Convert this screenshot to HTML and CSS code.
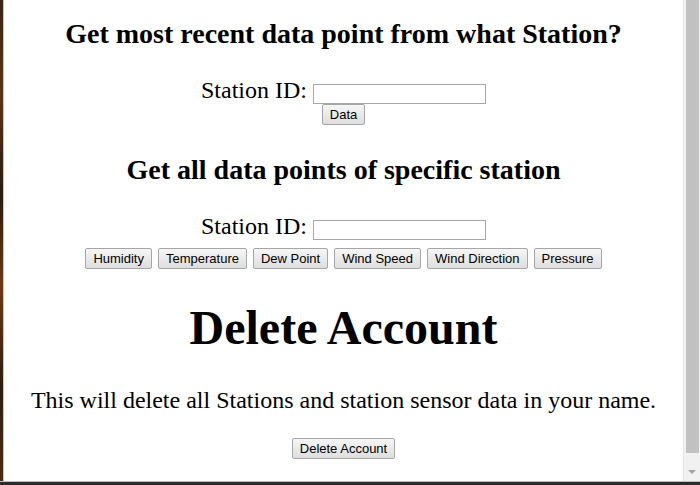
FILE: index.html
```html
<!DOCTYPE html>
<html>
<head>
<meta charset="utf-8">
<link rel="stylesheet" href="styles.css">
</head>
<body>
<div class="frame">
  <div class="edge-left"></div>
  <main class="page">
    <section class="block">
      <h2 class="title">Get most recent data point from what Station?</h2>
      <div class="field"><label class="label">Station ID:</label> <input class="input" type="text"></div>
      <div class="actions"><button class="btn">Data</button></div>
    </section>
    <section class="block">
      <h2 class="title title-2">Get all data points of specific station</h2>
      <div class="field"><label class="label">Station ID:</label> <input class="input" type="text"></div>
      <div class="actions actions-row">
        <button class="btn">Humidity</button>
        <button class="btn">Temperature</button>
        <button class="btn">Dew Point</button>
        <button class="btn">Wind Speed</button>
        <button class="btn">Wind Direction</button>
        <button class="btn">Pressure</button>
      </div>
    </section>
    <section class="block">
      <h1 class="big">Delete Account</h1>
      <p class="note">This will delete all Stations and station sensor data in your name.</p>
      <div class="actions"><button class="btn">Delete Account</button></div>
    </section>
  </main>
  <div class="scrollbar">
    <div class="thumb"></div>
    <div class="arrow"></div>
  </div>
</div>
<div class="edge-bottom"></div>
</body>
</html>
```
FILE: styles.css
```css
html, body {
  margin: 0;
  padding: 0;
  width: 700px;
  height: 485px;
  overflow: hidden;
  background: #fff;
}
body {
  display: flex;
  flex-direction: column;
  font-family: "Liberation Serif", "Times New Roman", serif;
}
.frame {
  display: flex;
  height: 482px;
}
.edge-left {
  width: 3px;
  background: linear-gradient(180deg, #3a2414 0%, #5a3518 20%, #2a1a10 40%, #6b3a14 60%, #2e1c10 80%, #4a2a12 100%);
  border-right: 1px solid #c8c8c8;
}
.page {
  flex: 1;
  text-align: center;
  color: #000;
  padding-top: 18px;
}
.scrollbar {
  width: 16px;
  background: #f1f1f1;
  border-left: 1px solid #e4e4e4;
  display: flex;
  flex-direction: column;
  align-items: center;
}
.thumb {
  width: 13px;
  flex: 1;
  background: #c1c1c1;
  margin-bottom: 17px;
}
.arrow {
  width: 0;
  height: 0;
  border-left: 4px solid transparent;
  border-right: 4px solid transparent;
  border-top: 4px solid #a3a3a3;
  margin-bottom: 7px;
}
.edge-bottom {
  height: 3px;
  background: #2b2b2b;
  border-top: 1px solid #bdbdbd;
}
.title {
  font-size: 28px;
  font-weight: bold;
  margin: 0 0 26px;
  line-height: 32px;
}
.title-2 {
  margin-top: 29px;
}
.field {
  font-size: 24px;
  line-height: 28px;
}
.input {
  width: 169px;
  height: 16px;
  border: 1px solid #a9a9a9;
  padding: 1px;
  margin: 0;
  font-size: 13px;
  vertical-align: baseline;
}
.actions {
  line-height: 0;
  margin-top: 0;
}
.actions-row {
  margin-top: 8px;
}
.btn {
  font-family: Arial, "Liberation Sans", sans-serif;
  font-size: 13px;
  height: 21px;
  line-height: 17px;
  padding: 0 7px;
  margin: 0 1px;
  color: #000;
  background: linear-gradient(180deg, #f6f6f6 0%, #dedede 100%);
  border: 1px solid #a6a6a6;
  border-radius: 2px;
}
.big {
  font-size: 48px;
  font-weight: bold;
  line-height: 56px;
  margin: 31px 0 0;
}
.note {
  font-size: 24px;
  line-height: 28px;
  margin: 30px 0 24px;
}
```
